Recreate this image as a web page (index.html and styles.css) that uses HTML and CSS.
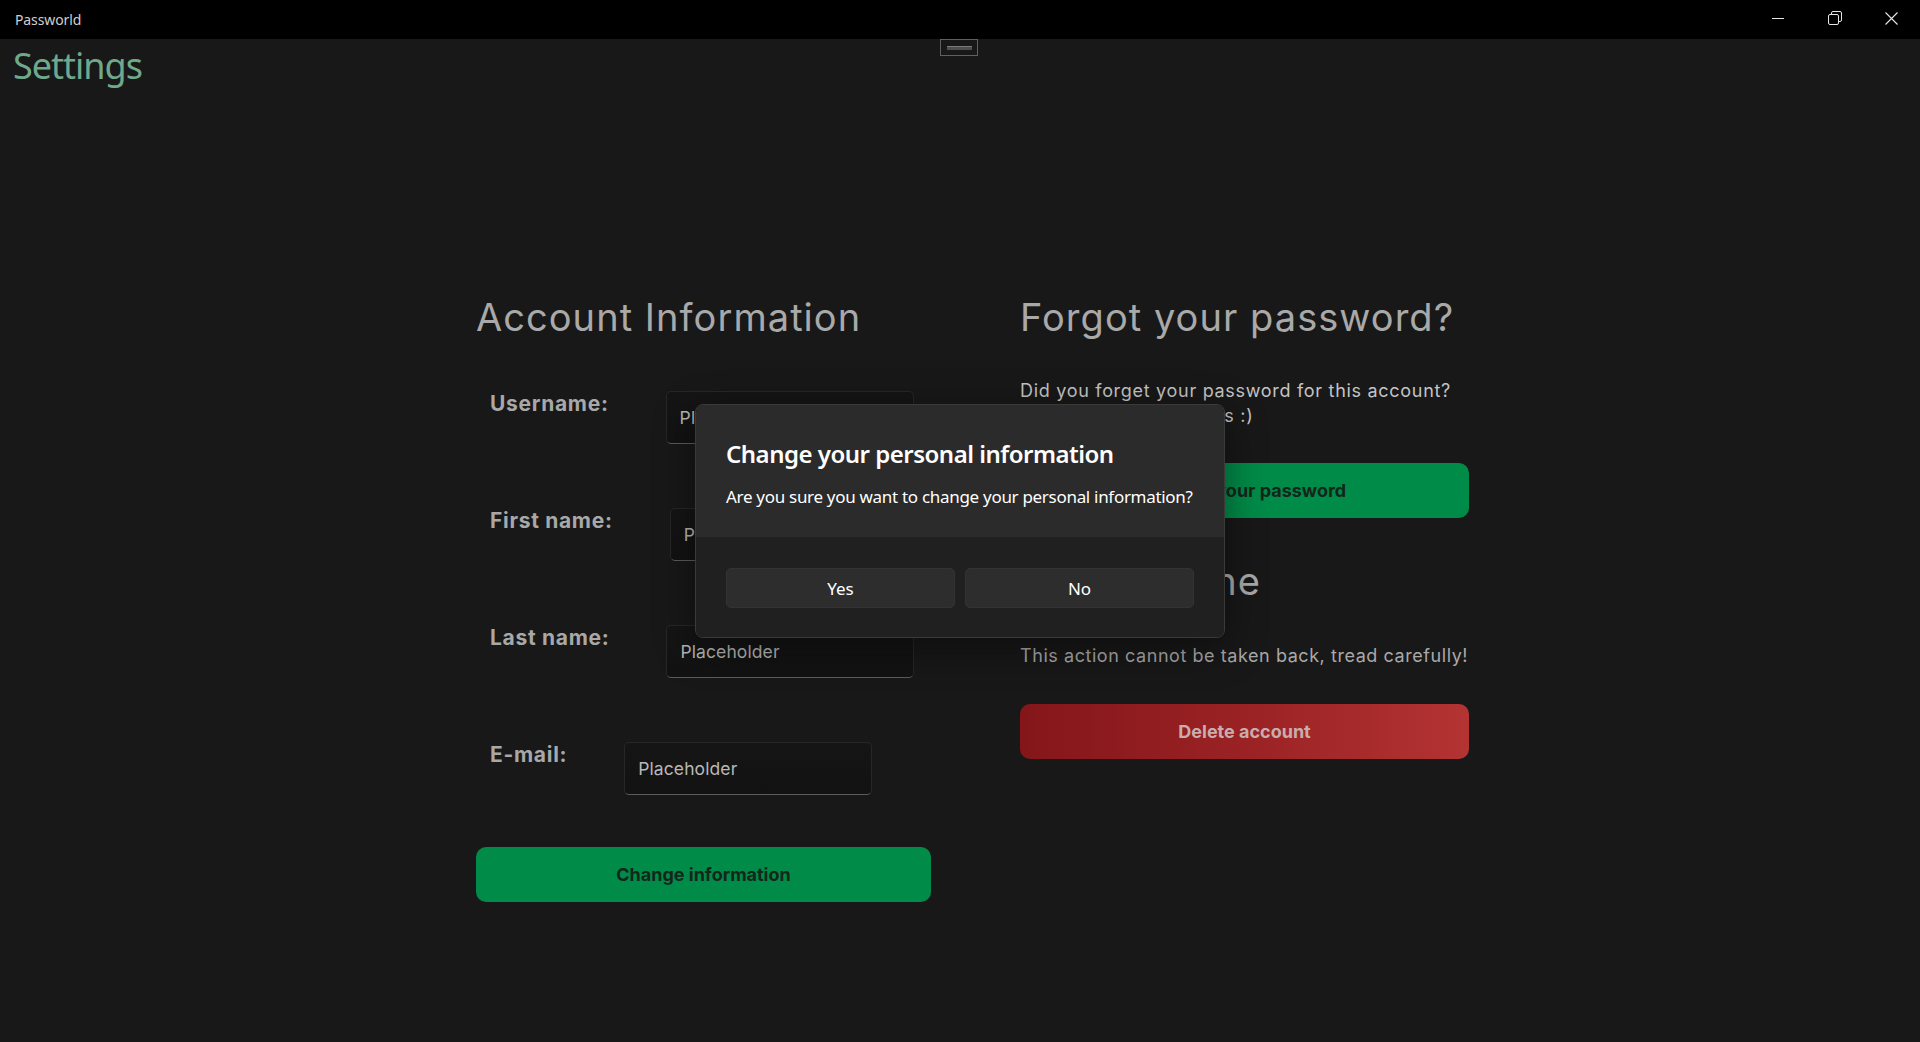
FILE: index.html
```html
<!DOCTYPE html>
<html lang="en">
<head>
<meta charset="utf-8">
<title>Passworld</title>
<link rel="stylesheet" href="styles.css">
</head>
<body>
<header class="titlebar">
  <span class="app-name">Passworld</span>
  <div class="caption-buttons">
    <span class="caption-btn"><svg width="12" height="12" viewBox="0 0 12 12"><path d="M0 6.5h12" stroke="#e6e6e6" stroke-width="1"/></svg></span>
    <span class="caption-btn"><svg width="14" height="14" viewBox="0 0 14 14" fill="none" stroke="#e6e6e6" stroke-width="1"><rect x="0.5" y="3.5" width="10" height="10" rx="1.5"/><path d="M3.5 3.5V2A1.5 1.5 0 0 1 5 0.5h7A1.5 1.5 0 0 1 13.5 2v7a1.5 1.5 0 0 1-1.5 1.5h-1.5"/></svg></span>
    <span class="caption-btn"><svg width="13" height="13" viewBox="0 0 13 13" stroke="#e6e6e6" stroke-width="1.1"><path d="M0.5 0.5l12 12M12.5 0.5l-12 12"/></svg></span>
  </div>
</header>
<main class="page">
  <div class="drag-handle"><span></span></div>
  <h1 class="page-title">Settings</h1>
  <div class="content">
    <section class="col col-left">
      <h2 class="section-title">Account Information</h2>
      <div class="form">
        <div class="field"><span class="field-label">Username:</span><div class="input">Placeholder</div></div>
        <div class="field"><span class="field-label">First name:</span><div class="input">Placeholder</div></div>
        <div class="field"><span class="field-label">Last name:</span><div class="input">Placeholder</div></div>
        <div class="field"><span class="field-label">E-mail:</span><div class="input">Placeholder</div></div>
      </div>
      <button class="btn btn-green btn-change">Change information</button>
    </section>
    <section class="col col-right">
      <h2 class="section-title">Forgot your password?</h2>
      <p class="text text-forgot">Did you forget your password for this account?<br>Don't worry, it happens :)</p>
      <button class="btn btn-green btn-reset">Change your password</button>
      <h2 class="section-title danger-title">Danger zone</h2>
      <p class="text text-danger">This action cannot be taken back, tread carefully!</p>
      <button class="btn btn-red">Delete account</button>
    </section>
  </div>
</main>
<div class="overlay">
  <div class="dialog">
    <div class="dialog-body">
      <h3 class="dialog-title">Change your personal information</h3>
      <p class="dialog-text">Are you sure you want to change your personal information?</p>
    </div>
    <div class="dialog-footer">
      <button class="dialog-btn">Yes</button>
      <button class="dialog-btn">No</button>
    </div>
  </div>
</div>
</body>
</html>
```

FILE: styles.css
```css
* { box-sizing: border-box; }

html, body {
  margin: 0;
  padding: 0;
}

body {
  width: 1920px;
  height: 1042px;
  overflow: hidden;
  background: #181818;
  font-family: "Noto Sans", "Open Sans", sans-serif;
  color: #fff;
}

.titlebar {
  height: 39px;
  background: #000;
  display: flex;
  align-items: center;
  justify-content: space-between;
}

.app-name {
  padding-left: 15px;
  font-size: 14px;
  color: #cfcfcf;
  letter-spacing: -0.1px;
}

.caption-buttons {
  display: flex;
  height: 100%;
}

.caption-btn {
  width: 57px;
  height: 100%;
  display: flex;
  align-items: center;
  justify-content: center;
  padding-bottom: 3px;
}

.caption-btn svg { display: block; }

.page {
  position: relative;
  height: 1003px;
}

.drag-handle {
  position: absolute;
  top: 0;
  left: 940px;
  width: 38px;
  height: 17px;
  border: 1px solid #606060;
  display: flex;
  align-items: center;
  justify-content: center;
}

.drag-handle span {
  width: 25px;
  height: 4px;
  background: #4e4e4e;
  border-top: 1px solid #7a7a7a;
}

.page-title {
  margin: 0;
  padding: 2px 0 0 13px;
  font-size: 36px;
  font-weight: 400;
  line-height: 49px;
  color: #6fa98c;
  letter-spacing: -1px;
}

.content {
  display: flex;
  justify-content: center;
  gap: 88px;
  padding-left: 25px;
  padding-top: 204px;
}

.col {
  display: flex;
  flex-direction: column;
}

.col-left { width: 455px; }
.col-right { width: 450px; padding-left: 1px; }

.section-title {
  margin: 0;
  font-family: "Inter", sans-serif;
  font-size: 38px;
  line-height: 46px;
  font-weight: 400;
  color: #a9a9a9;
  white-space: nowrap;
  letter-spacing: 1.05px;
}

.form {
  margin-top: 51px;
  display: flex;
  flex-direction: column;
  gap: 64px;
}

.field {
  display: flex;
  align-items: flex-start;
  padding-left: 14px;
  height: 53px;
}

.field-label {
  font-family: "Inter", sans-serif;
  font-weight: 700;
  font-size: 21px;
  line-height: 25px;
  color: #a8a8a8;
  margin-right: 57px;
  white-space: nowrap;
  letter-spacing: 0.7px;
}

.input {
  width: 248px;
  height: 53px;
  padding: 0 13px;
  display: flex;
  align-items: center;
  font-family: "Inter", sans-serif;
  font-size: 17.5px;
  letter-spacing: 0.1px;
  color: #b8b8b8;
  border: 1px solid #272727;
  border-bottom-color: #5c5c5c;
  border-radius: 5px;
  background: linear-gradient(180deg, #151515, #121212);
}

.btn {
  font-family: "Inter", sans-serif;
  font-weight: 700;
  font-size: 18px;
  height: 55px;
  border: none;
  border-radius: 10px;
  padding: 0;
  width: 100%;
}

.btn-green {
  background: #008b48;
  color: #14261b;
}

.btn-change { margin-top: 52px; }

.text {
  margin: 0;
  font-family: "Inter", sans-serif;
  font-size: 18px;
  line-height: 25px;
  color: #c4c4c4;
  white-space: nowrap;
}

.text-forgot { margin-top: 38px; letter-spacing: 0.7px; }
.btn-reset { margin-top: 35px; }
.danger-title { margin-top: 40px; }
.text-danger { margin-top: 39px; color: #a9a9a9; letter-spacing: 0.56px; }

.btn-red {
  margin-top: 36px;
  background: linear-gradient(90deg, #84161a 0%, #9a2224 50%, #b43333 100%);
  color: #c9adad;
}

.overlay {
  position: fixed;
  inset: 0;
  display: flex;
  align-items: center;
  justify-content: center;
}

.dialog {
  width: 530px;
  border: 1px solid #3a3a3a;
  border-radius: 8px;
  overflow: hidden;
  box-shadow: 0 10px 40px rgba(0, 0, 0, 0.45);
}

.dialog-body {
  background: #2b2b2b;
  padding: 31px 30px 28px;
}

.dialog-title {
  margin: 0;
  font-size: 24px;
  font-weight: 600;
  line-height: 35px;
  color: #ffffff;
  letter-spacing: -0.5px;
  white-space: nowrap;
}

.dialog-text {
  margin: 13px 0 0;
  font-size: 17px;
  line-height: 25px;
  color: #ffffff;
  letter-spacing: -0.3px;
  white-space: nowrap;
}

.dialog-footer {
  background: #202020;
  padding: 31px 30px 29px;
  display: flex;
  gap: 10px;
}

.dialog-btn {
  flex: 1;
  height: 40px;
  background: #2d2d2d;
  border: 1px solid #333;
  border-radius: 5px;
  color: #fff;
  font-family: "Noto Sans", sans-serif;
  font-size: 17px;
  padding: 0;
}
```
